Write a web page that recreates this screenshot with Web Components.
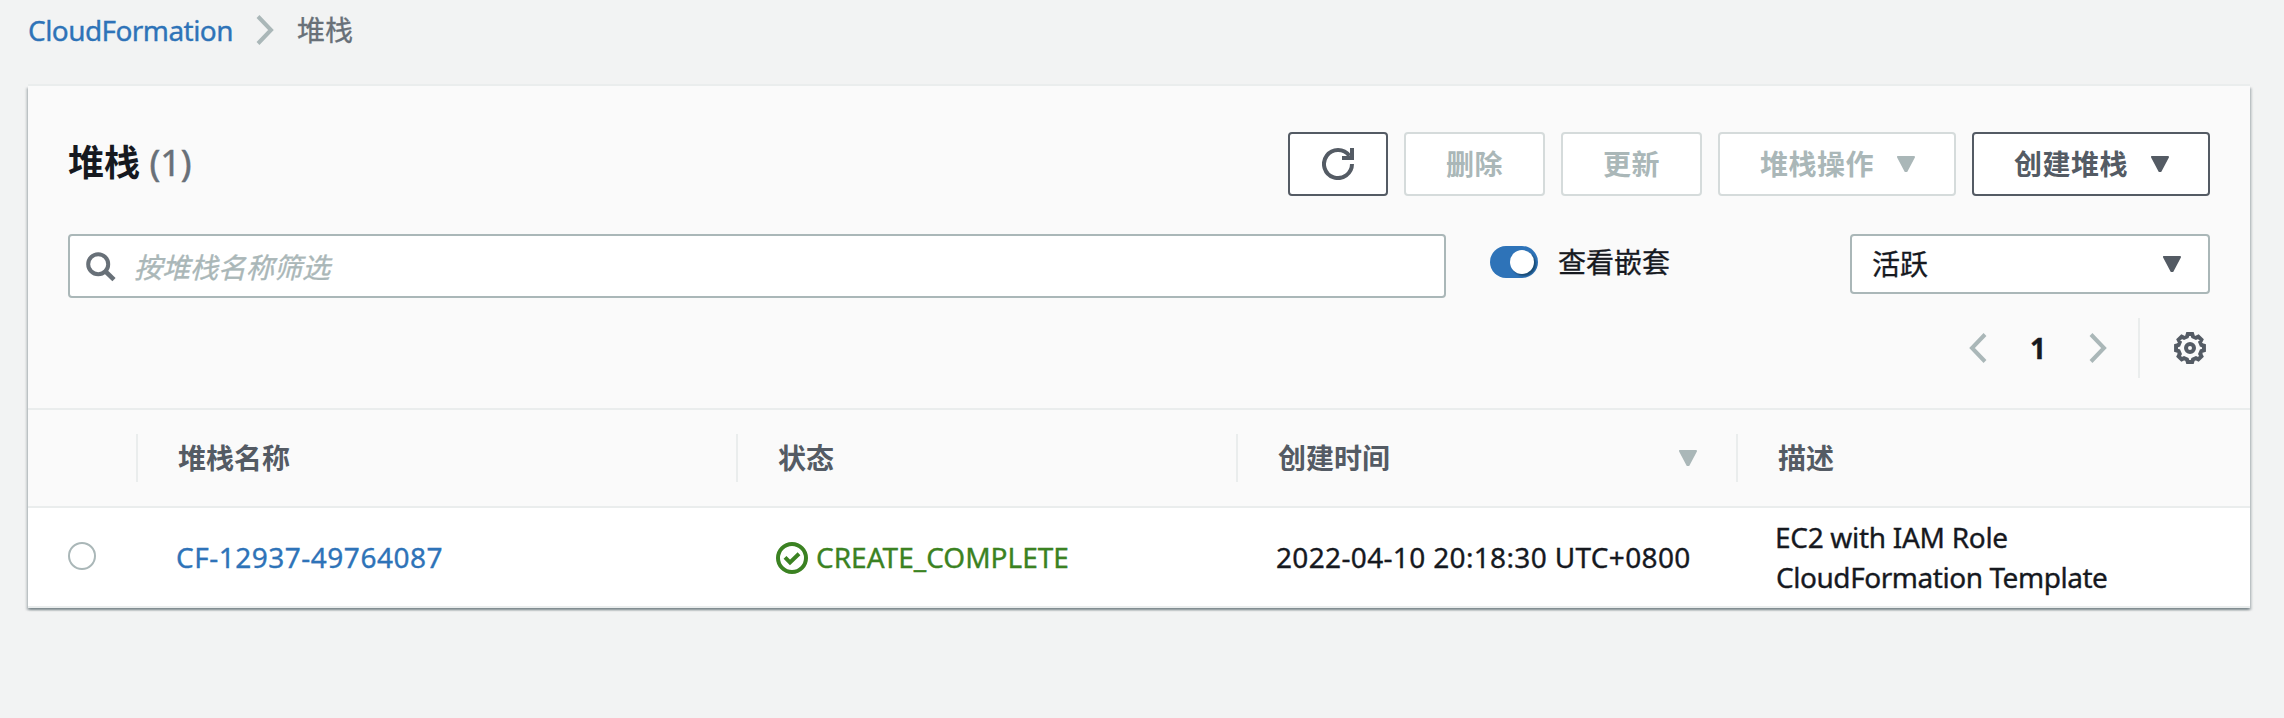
<!DOCTYPE html>
<html lang="zh-CN">
<head>
<meta charset="utf-8">
<title>CloudFormation - 堆栈</title>
<style>
  html, body { margin: 0; height: 100%; background: #f2f3f3; }
  body { font: 400 28px/40px "Noto Sans", "Noto Sans CJK SC", sans-serif; color: #16191f; overflow: hidden;
    -webkit-text-stroke: .35px; }
</style>
</head>
<body>
<cf-console></cf-console>
<script>
const define = (name, html, setup) => {
  const template = document.createElement('template');
  template.innerHTML = html;
  customElements.define(name, class extends HTMLElement {
    constructor() {
      super();
      this.attachShadow({ mode: 'open' }).append(template.content.cloneNode(true));
      if (setup) setup(this.shadowRoot, this);
    }
  });
};

/* Outline of the eight-toothed gear, centred on 16,16. */
const gearPoints = () => {
  const points = [];
  for (let tooth = 0; tooth < 8; tooth++) {
    for (const [offset, radius] of [[-9, 14.1], [9, 14.1], [15, 11.8], [30, 11.8]]) {
      const a = (tooth * 45 + offset) * Math.PI / 180;
      points.push((16 + radius * Math.sin(a)).toFixed(2) + ',' + (16 - radius * Math.cos(a)).toFixed(2));
    }
  }
  return points.join(' ');
};

const icons = {
  'chevron-right': [18, 30, '<path d="M2 1.5 15 15 2 28.5" stroke-width="4"/>'],
  'chevron-left': [18, 30, '<path d="M16 1.5 3 15 16 28.5" stroke-width="4"/>'],
  caret: [20, 16, '<path d="M2 1h16L10.6 15h-1.2Z" fill="currentColor" stroke-width="2" stroke-linejoin="round"/>'],
  refresh: [32, 32, '<path d="M30 16A14 14 0 1 1 27.4 7.9M30 0v10H20" stroke-width="4"/>'],
  search: [30, 30, '<circle cx="12.2" cy="12.2" r="10" stroke-width="4"/><path d="m19 19 9 8.6" stroke-width="4.6"/>'],
  gear: [32, 32, '<polygon points="' + gearPoints() + '" stroke-width="4"/><circle cx="16" cy="16" r="4" stroke-width="4"/>'],
  success: [32, 32, '<circle cx="16" cy="16" r="14" stroke-width="4"/><path d="m9 15.4 5 5 9-8.6" stroke-width="4"/>']
};

customElements.define('cf-icon', class extends HTMLElement {
  connectedCallback() {
    const [w, h, body] = icons[this.getAttribute('name')];
    const root = this.shadowRoot || this.attachShadow({ mode: 'open' });
    root.innerHTML = `<style>:host{display:block;flex:none;width:${w}px;height:${h}px}svg{display:block}</style>
      <svg width="${w}" height="${h}" viewBox="0 0 ${w} ${h}" fill="none" stroke="currentColor">${body}</svg>`;
  }
});

define('cf-breadcrumbs', `
  <style>
    :host { display: flex; align-items: center; height: 40px; color: #687078; }
    a { color: #2e73b8; letter-spacing: -.57px; width: 228px; }
    cf-icon { color: #aab7b8; margin: 0 23px 0 0; }
  </style>
  <a><slot name="parent"></slot></a><cf-icon name="chevron-right"></cf-icon><slot></slot>`);

define('cf-button', `
  <style>
    :host { display: flex; align-items: center; box-sizing: border-box; height: 64px; padding: 0 40px;
      border: 2px solid #545b64; border-radius: 4px; background: #fff; color: #545b64;
      font-weight: 700; letter-spacing: .5px; white-space: nowrap; -webkit-text-stroke: 0; }
    :host([disabled]) { border-color: #d5dbdb; color: #aab7b8; }
    :host([icon]) { padding: 0 32px; }
    :host([menu]) { padding-right: 38px; }
    ::slotted(cf-icon) { margin-left: 22px; }
    :host([icon]) ::slotted(cf-icon) { margin-left: 0; }
  </style><slot></slot>`);

define('cf-search', `
  <style>
    :host { display: flex; align-items: center; box-sizing: border-box; width: 1378px; height: 64px; padding: 1px 0 0 16px;
      border: 2px solid #aab7b8; border-radius: 4px; background: #fff; color: #aab7b8; font-style: italic; }
    cf-icon { color: #687078; margin-right: 18px; }
  </style><cf-icon name="search"></cf-icon><slot></slot>`);

define('cf-toggle', `
  <style>
    :host { display: flex; align-items: center; height: 40px; padding-top: 8px; }
    .track { display: flex; align-items: center; justify-content: flex-end; box-sizing: border-box; width: 48px; height: 32px;
      padding-right: 4px; border-radius: 16px; background: #2e73b8; margin-right: 20px; }
    .knob { width: 24px; height: 24px; border-radius: 50%; background: #fff; box-shadow: 2px 2px 2px rgba(0,28,36,.45); }
  </style><div class="track"><div class="knob"></div></div><slot></slot>`);

define('cf-select', `
  <style>
    :host { display: flex; align-items: center; justify-content: space-between; box-sizing: border-box; width: 360px; height: 60px;
      padding: 0 26px 0 20px; border: 2px solid #aab7b8; border-radius: 4px; background: #fff; }
    cf-icon { color: #545b64; }
  </style><span><slot></slot></span><cf-icon name="caret"></cf-icon>`);

define('cf-pagination', `
  <style>
    :host { display: flex; align-items: center; height: 60px; color: #aab7b8; }
    b { color: #16191f; width: 18px; margin: 0 42px; text-align: center; }
    .settings { display: flex; align-items: center; height: 60px; border-left: 2px solid #eaeded;
      margin-left: 31px; padding: 0 4px 0 34px; color: #545b64; }
  </style>
  <cf-icon name="chevron-left"></cf-icon><b><slot></slot></b><cf-icon name="chevron-right"></cf-icon>
  <div class="settings"><cf-icon name="gear"></cf-icon></div>`);

define('cf-header-cell', `
  <style>
    :host { display: flex; align-items: center; justify-content: space-between; height: 48px; box-sizing: border-box;
      padding: 0 38px 0 40px; border-right: 2px solid #eaeded; color: #545b64; font-weight: 700; -webkit-text-stroke: 0; }
    :host([last]) { border-right: 0; }
    ::slotted(cf-icon) { color: #aab7b8; }
  </style><slot></slot>`);

define('cf-status', `
  <style>
    :host { display: flex; align-items: center; color: #3b8222; }
    cf-icon { margin: 2px 8px 0 0; }
  </style><cf-icon name="success"></cf-icon><slot></slot>`);

define('cf-stack-table', `
  <style>
    :host { display: block; }
    .row { display: grid; grid-template-columns: 110px 600px 500px 500px 1fr; align-items: center; border-bottom: 2px solid #eaeded; }
    .head { height: 96px; border-top: 2px solid #eaeded; }
    .data { height: 98px; background: #fff; }
    .cell { padding-left: 38px; white-space: nowrap; }
    .radio { box-sizing: border-box; width: 28px; height: 28px; border: 2px solid #aab7b8; border-radius: 50%; margin: -2px 0 0 40px; background: #fff; }
    a { color: #2e73b8; letter-spacing: .5px; }
    .time { letter-spacing: .34px; padding-left: 38px; }
    .desc { padding-left: 37px; }
    .desc div { letter-spacing: -.3px; }
    .desc div + div { letter-spacing: -.45px; padding-left: 1px; }
  </style>
  <div class="row head">
    <cf-header-cell></cf-header-cell>
    <cf-header-cell>堆栈名称</cf-header-cell>
    <cf-header-cell>状态</cf-header-cell>
    <cf-header-cell><span>创建时间</span><cf-icon name="caret"></cf-icon></cf-header-cell>
    <cf-header-cell last>描述</cf-header-cell>
  </div>
  <div class="row data">
    <div class="radio"></div>
    <div class="cell"><a>CF-12937-49764087</a></div>
    <div class="cell"><cf-status>CREATE_COMPLETE</cf-status></div>
    <div class="cell time">2022-04-10 20:18:30 UTC+0800</div>
    <div class="cell desc"><div>EC2 with IAM Role</div><div>CloudFormation Template</div></div>
  </div>`);

define('cf-panel', `
  <style>
    :host { display: block; width: 2222px; background: #fafafa;
      box-shadow: 0 -2px 0 #eaeded, 0 2px 2px rgba(0,28,36,.3), 2px 2px 2px rgba(0,28,36,.15), -2px 2px 2px rgba(0,28,36,.15); }
    header { box-sizing: border-box; height: 322px; padding: 46px 40px 0; }
    .title, .filters, .pages { display: flex; align-items: flex-start; }
    .title { height: 64px; margin-bottom: 38px; }
    h1 { flex: 1; margin: 9px 0 0; font-size: 36px; line-height: 44px; font-weight: 700; -webkit-text-stroke: 0; }
    h1 span { font-weight: 400; color: #687078; -webkit-text-stroke: .5px; }
    .actions { display: flex; gap: 16px; }
    .filters { height: 64px; }
    cf-toggle { margin-left: 44px; }
    cf-select { margin-left: auto; }
    .pages { justify-content: flex-end; margin-top: 20px; }
  </style>
  <header>
    <div class="title">
      <h1>堆栈 <span>(1)</span></h1>
      <div class="actions">
        <cf-button icon><cf-icon name="refresh"></cf-icon></cf-button>
        <cf-button disabled>删除</cf-button>
        <cf-button disabled>更新</cf-button>
        <cf-button disabled menu><span>堆栈操作</span><cf-icon name="caret"></cf-icon></cf-button>
        <cf-button menu><span>创建堆栈</span><cf-icon name="caret"></cf-icon></cf-button>
      </div>
    </div>
    <div class="filters">
      <cf-search>按堆栈名称筛选</cf-search>
      <cf-toggle>查看嵌套</cf-toggle>
      <cf-select>活跃</cf-select>
    </div>
    <div class="pages"><cf-pagination>1</cf-pagination></div>
  </header>
  <cf-stack-table></cf-stack-table>`);

define('cf-console', `
  <style>
    :host { display: block; padding: 10px 0 0 28px; }
    cf-panel { margin-top: 36px; }
  </style>
  <cf-breadcrumbs><span slot="parent">CloudFormation</span>堆栈</cf-breadcrumbs>
  <cf-panel></cf-panel>`);
</script>
</body>
</html>
